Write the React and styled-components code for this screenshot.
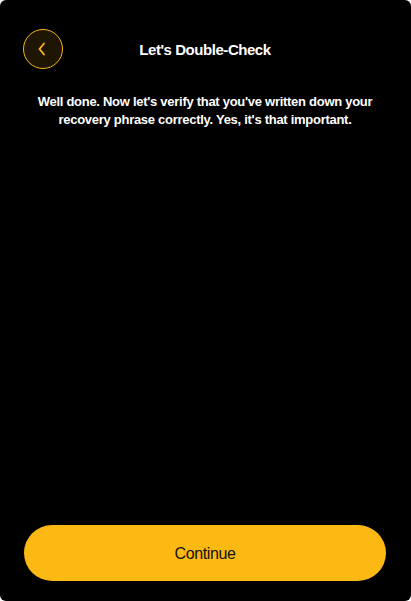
import React from "react";
import styled, { createGlobalStyle } from "styled-components";

const Global = createGlobalStyle`
  html, body { margin: 0; padding: 0; background: #ffffff; }
  #root { width: 411px; height: 601px; }
`;

const Panel = styled.div`
  width: 411px;
  height: 601px;
  box-sizing: border-box;
  background: #000000;
  border-radius: 6px;
  display: flex;
  flex-direction: column;
  padding: 29px 24px 20px 23px;
  font-family: "Liberation Sans", Arial, sans-serif;
  color: #ffffff;
`;

const Header = styled.div`
  display: grid;
  grid-template-columns: 40px 1fr 40px;
  align-items: center;
`;

const BackButton = styled.button`
  width: 40px;
  height: 40px;
  border-radius: 50%;
  border: 1px solid #f5b514;
  background: #1e1503;
  display: flex;
  align-items: center;
  justify-content: center;
  padding: 0 2px 0 0;
  color: #f5b514;
`;

const Title = styled.h1`
  margin: 0;
  text-align: center;
  font-size: 15px;
  font-weight: 700;
  letter-spacing: -0.45px;
`;

const Lead = styled.p`
  margin: 24px 0 0;
  text-align: center;
  font-size: 13px;
  line-height: 18px;
  font-weight: 700;
  letter-spacing: -0.28px;
`;

const Spacer = styled.div`
  flex: 1;
`;

const Continue = styled.button`
  height: 56px;
  width: 362px;
  margin-left: 1px;
  border: none;
  border-radius: 28px;
  background: #fdb913;
  color: #111111;
  font-family: inherit;
  font-size: 16px;
  font-weight: 400;
  letter-spacing: -0.4px;
  padding-top: 2px;
`;

export default function App() {
  return (
    <>
      <Global />
      <Panel>
        <Header>
          <BackButton aria-label="Back">
            <svg width="8" height="14" viewBox="0 0 8 14" fill="none">
              <path d="M6 1.5L1.5 7L6 12.5" stroke="currentColor" strokeWidth="1.9" strokeLinecap="round" strokeLinejoin="round" />
            </svg>
          </BackButton>
          <Title>Let's Double-Check</Title>
          <span />
        </Header>
        <Lead>
          Well done. Now let's verify that you've written down your recovery phrase correctly. Yes, it's that important.
        </Lead>
        <Spacer />
        <Continue>Continue</Continue>
      </Panel>
    </>
  );
}
